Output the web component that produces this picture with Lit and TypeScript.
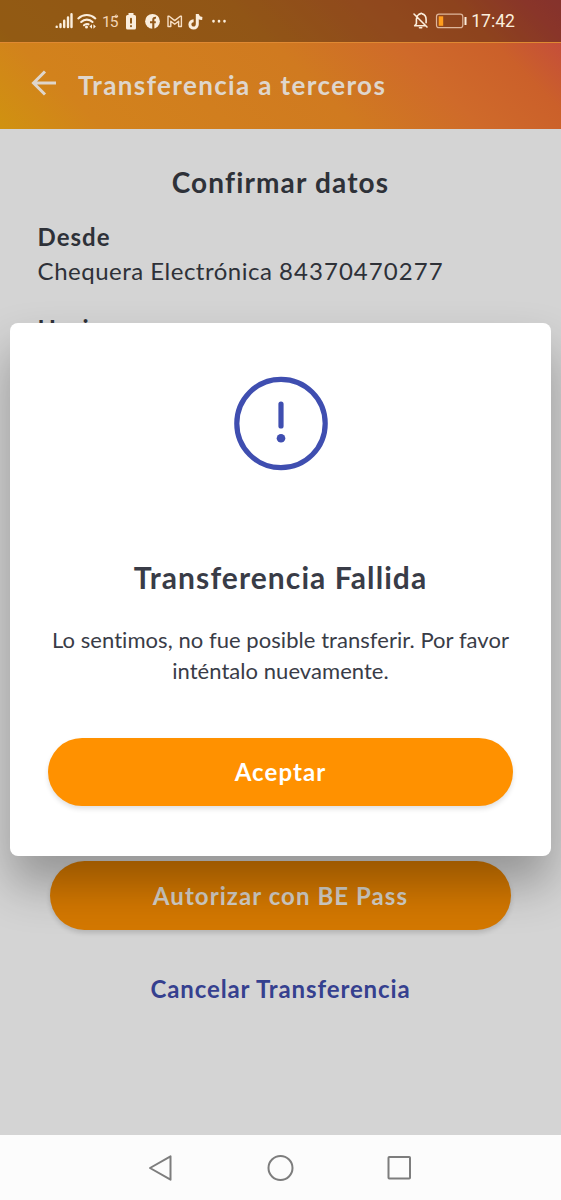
import { LitElement, html, css } from "lit";
import { customElement } from "lit/decorators.js";

@customElement("status-bar")
class StatusBar extends LitElement {
  static styles = css`
    :host { display: flex; justify-content: space-between; height: 42px; box-sizing: border-box; padding: 0 46px 0 54px; background: rgba(0, 0, 0, 0.3); color: #fbeedd; font-family: Roboto, sans-serif; }
    svg { display: block; width: 180px; height: 42px; }
    .right { display: flex; align-items: center; }
    .right svg { width: 59px; }
    .time { font-size: 17.6px; line-height: 43px; }
    .temp { font: 15.5px Roboto, sans-serif; letter-spacing: -0.9px; }
  `;
  render() {
    return html`
      <svg viewBox="54 0 180 42" fill="none" stroke="#fbeedd" stroke-linecap="round">
        <path d="M56.700 26.700v.2M60.500 24.200v2.800M64.200 20.800v6.200M68 17.500v9.500M71.500 14.200v12.800" stroke-width="2.400" />
        <path d="M78.300 18.400a12.500 12.500 0 0 1 17 0M81.200 22a8 8 0 0 1 11.300 0M84 25.200a4.200 4.200 0 0 1 4.500-.9" stroke-width="2.100" />
        <circle cx="86.500" cy="27" r="1.500" fill="#fbeedd" stroke="none" />
        <path d="M92 24.300l-2.500 2.200 2.500 2.200zM93.400 24.300l2.500 2.200-2.500 2.200z" fill="#fbeedd" stroke="none" />
        <text class="temp" x="102" y="26.600" fill="#f4d5b4" stroke="none">15</text>
        <circle cx="116.300" cy="16.300" r="1.300" stroke="#f4d5b4" stroke-width="1" />
        <path d="M128.500 13h5v2h1a1.500 1.500 0 0 1 1.500 1.500V28a1.500 1.500 0 0 1-1.500 1.500h-7A1.500 1.500 0 0 1 126 28V16.500a1.500 1.500 0 0 1 1.500-1.500h1z" fill="#fbeedd" stroke="none" />
        <path d="M131 18.800v4M131 26v.2" stroke="#925a18" stroke-width="2" />
        <circle cx="152.500" cy="21.300" r="7.400" fill="#fbeedd" stroke="none" />
        <path d="M153.300 29v-9.200q0-2.300 2.700-2M150 22.300h5.800" stroke="#91581a" stroke-width="2.100" stroke-linecap="butt" />
        <path d="M168 26.500v-10.200h1.200l5.500 4.300 5.500-4.300h1.200v10.200h-2.800v-5.200l-3.900 3-3.900-3v5.200z" stroke="#f8dfc4" stroke-width="1.400" stroke-linejoin="round" />
        <path d="M197.300 14v10.300a3.700 3.700 0 1 1-3.700-3.600M197.300 14.600q.8 3.600 5 4" stroke-width="3" stroke-linecap="butt" />
        <path d="M213.500 21.200v.1M219 21.200v.1M224.500 21.200v.1" stroke-width="2.700" />
      </svg>
      <div class="right">
        <svg viewBox="412 0 59 42" fill="none" stroke="#fbeedd" stroke-linecap="round" stroke-linejoin="round">
          <path d="M417.700 15.600q-1.300 1.500-1.300 4v4.200l-1.700 2h10.800M418.600 14.700q.8-.6 1.700-.8.900-1.300 1.800 0 4 .9 4 5.700v3.200M414 14l13 13" stroke-width="1.600" />
          <path d="M419.500 27.800h2.200" stroke-width="1.600" />
          <rect x="436.500" y="14.200" width="26.300" height="13.500" rx="2.500" stroke="#deb69c" stroke-width="1.200" />
          <path d="M438.700 16.300h4.500v9.500h-4.500z" fill="#ff9d1d" stroke="none" />
          <path d="M465.500 17v8" stroke-width="2" stroke-linecap="butt" />
        </svg>
        <span class="time">17:42</span>
      </div>
    `;
  }
}

@customElement("failure-dialog")
class FailureDialog extends LitElement {
  static styles = css`
    :host { display: flex; flex-direction: column; align-items: center; box-sizing: border-box; padding: 53px 38px 50px 38px; background: #fff; border-radius: 8px; box-shadow: 0 28px 48px rgba(0, 0, 0, 0.3); color: #393c47; text-align: center; }
    svg { width: 95px; height: 95px; display: block; }
    h2 { margin: 86px 0 0; font-size: 30px; line-height: 40px; font-weight: 700; letter-spacing: 1.08px; white-space: nowrap; }
    p { margin: 27px 0 0; font-size: 22px; line-height: 31px; letter-spacing: 0.05px; white-space: nowrap; }
    button { margin-top: 52px; padding: 0 0 2px; width: 100%; height: 68px; border: 0; border-radius: 34px; background: #ff9100; color: #fff; font: 700 24px Lato, sans-serif; letter-spacing: 1.1px; box-shadow: 0 3px 5px rgba(0, 0, 0, 0.12); }
  `;
  render() {
    return html`
      <svg viewBox="0 0 95 95" fill="none" stroke="#3f4eb0">
        <circle cx="48" cy="47.500" r="44.200" stroke-width="5.200" />
        <path d="M48 28v22" stroke-width="5.200" stroke-linecap="round" />
        <circle cx="48" cy="62.200" r="4.300" fill="#3f4eb0" stroke="none" />
      </svg>
      <h2>Transferencia Fallida</h2>
      <p>Lo sentimos, no fue posible transferir. Por favor<br />inténtalo nuevamente.</p>
      <button>Aceptar</button>
    `;
  }
}

@customElement("app-root")
class AppRoot extends LitElement {
  static styles = css`
    :host { display: flex; flex-direction: column; position: relative; width: 561px; height: 1200px; overflow: hidden; background: #d4d4d4; color: #2e3138; font-family: Lato, sans-serif; }
    .top { height: 129px; background: linear-gradient(45deg, #d09210 0%, #d2821c 15%, #d07a20 52%, #cf6a2a 70%, #cb602a 84%, #c44c3c 95%, #c04840 100%); }
    .bar { display: flex; align-items: center; box-sizing: border-box; height: 87px; padding: 0 0 3px 30px; border-top: 1px solid #e08932; color: #dfd6cc; }
    .back { width: 28px; height: 28px; margin: 0 20px 4px 0; }
    .title { font-size: 26px; line-height: 32px; font-weight: 700; letter-spacing: 1.37px; white-space: nowrap; }
    main { flex: 1; display: flex; flex-direction: column; padding: 0 50px 0 37.6px; }
    h1 { align-self: center; margin: 35px 0 0 12.4px; font-size: 28px; line-height: 36px; font-weight: 700; letter-spacing: 1.15px; white-space: nowrap; }
    dl { margin: 20px 0 0; font-size: 24px; line-height: 34px; white-space: nowrap; }
    dt { font-weight: 700; letter-spacing: 1px; }
    dd { margin: 0 0 24px; letter-spacing: 0.5px; }
    .number { letter-spacing: 1.05px; }
    .actions { display: flex; flex-direction: column; align-items: center; margin: auto 0 129px 12.4px; }
    .pass { width: 461px; height: 69px; border: 0; border-radius: 35px; background: #d47800; color: #d4d0c8; font: 700 24px Lato, sans-serif; letter-spacing: 1.07px; box-shadow: 0 3px 5px rgba(0, 0, 0, 0.14); }
    .cancel { margin-top: 42px; font-size: 24px; line-height: 34px; font-weight: 700; letter-spacing: 0.9px; color: #35408f; white-space: nowrap; }
    failure-dialog { position: absolute; left: 10px; top: 323px; width: 541px; height: 533px; }
    nav { display: flex; justify-content: center; align-items: center; gap: 92px; height: 65px; background: #fcfcfc; position: relative; }
    nav svg { width: 27px; height: 27px; fill: none; stroke: #7d7d7d; stroke-width: 2; stroke-linejoin: round; }
  `;
  render() {
    return html`
      <div class="top">
        <status-bar></status-bar>
        <div class="bar">
          <svg class="back" viewBox="0 0 28 28" fill="none" stroke="#dfd6cc" stroke-width="3"><path d="M26 14H3.500M15 2.500L3.500 14 15 25.500" /></svg>
          <span class="title">Transferencia a terceros</span>
        </div>
      </div>
      <main>
        <h1>Confirmar datos</h1>
        <dl>
          <dt>Desde</dt>
          <dd>Chequera Electrónica <span class="number">84370470277</span></dd>
          <dt>Hacia</dt>
        </dl>
        <div class="actions">
          <button class="pass">Autorizar con BE Pass</button>
          <span class="cancel">Cancelar Transferencia</span>
        </div>
      </main>
      <nav>
        <svg viewBox="0 0 27 27"><path d="M22.500 2.300v23.400L2 14z" /></svg>
        <svg viewBox="0 0 27 27"><circle cx="13.500" cy="14" r="12" /></svg>
        <svg viewBox="0 0 27 27"><rect x="2.500" y="3" width="21.500" height="21.500" rx=".8" /></svg>
      </nav>
      <failure-dialog></failure-dialog>
    `;
  }
}
